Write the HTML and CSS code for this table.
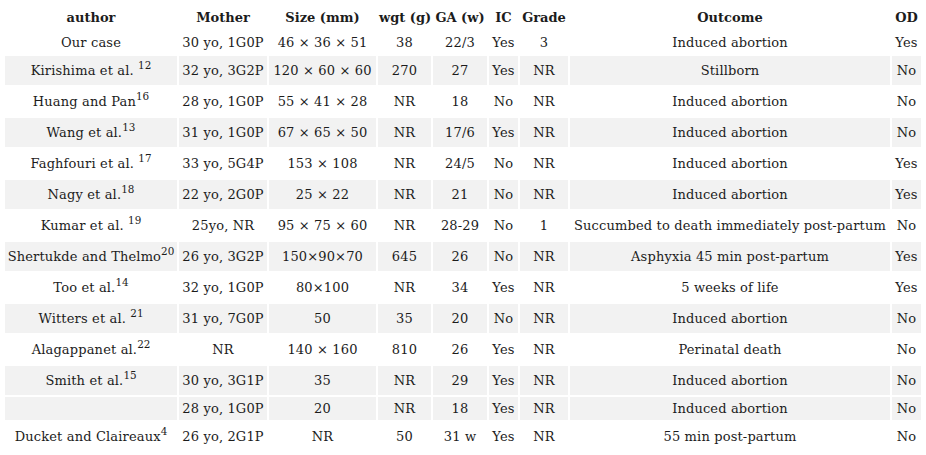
FILE: index.html
```html
<!DOCTYPE html>
<html>
<head>
<meta charset="utf-8">
<link rel="stylesheet" href="styles.css">
</head>
<body>
<table class="cases">
  <colgroup>
    <col class="c-author"><col class="c-mother"><col class="c-size"><col class="c-wgt"><col class="c-ga"><col class="c-ic"><col class="c-grade"><col class="c-outcome"><col class="c-od">
  </colgroup>
  <thead>
    <tr><th>author</th><th>Mother</th><th>Size (mm)</th><th>wgt (g)</th><th>GA (w)</th><th>IC</th><th>Grade</th><th>Outcome</th><th>OD</th></tr>
  </thead>
  <tbody>
    <tr><td>Our case</td><td>30 yo, 1G0P</td><td>46 × 36 × 51</td><td>38</td><td>22/3</td><td>Yes</td><td>3</td><td>Induced abortion</td><td>Yes</td></tr>
    <tr class="alt tall"><td>Kirishima et al. <sup>12</sup></td><td>32 yo, 3G2P</td><td>120 × 60 × 60</td><td>270</td><td>27</td><td>Yes</td><td>NR</td><td>Stillborn</td><td>No</td></tr>
    <tr class="tall"><td>Huang and Pan<sup>16</sup></td><td>28 yo, 1G0P</td><td>55 × 41 × 28</td><td>NR</td><td>18</td><td>No</td><td>NR</td><td>Induced abortion</td><td>No</td></tr>
    <tr class="alt tall"><td>Wang et al.<sup>13</sup></td><td>31 yo, 1G0P</td><td>67 × 65 × 50</td><td>NR</td><td>17/6</td><td>Yes</td><td>NR</td><td>Induced abortion</td><td>No</td></tr>
    <tr class="tall"><td>Faghfouri et al. <sup>17</sup></td><td>33 yo, 5G4P</td><td>153 × 108</td><td>NR</td><td>24/5</td><td>No</td><td>NR</td><td>Induced abortion</td><td>Yes</td></tr>
    <tr class="alt tall"><td>Nagy et al.<sup>18</sup></td><td>22 yo, 2G0P</td><td>25 × 22</td><td>NR</td><td>21</td><td>No</td><td>NR</td><td>Induced abortion</td><td>Yes</td></tr>
    <tr class="tall"><td>Kumar et al. <sup>19</sup></td><td>25yo, NR</td><td>95 × 75 × 60</td><td>NR</td><td>28-29</td><td>No</td><td>1</td><td>Succumbed to death immediately post-partum</td><td>No</td></tr>
    <tr class="alt tall"><td>Shertukde and Thelmo<sup>20</sup></td><td>26 yo, 3G2P</td><td>150×90×70</td><td>645</td><td>26</td><td>No</td><td>NR</td><td>Asphyxia 45 min post-partum</td><td>Yes</td></tr>
    <tr class="tall"><td>Too et al.<sup>14</sup></td><td>32 yo, 1G0P</td><td>80×100</td><td>NR</td><td>34</td><td>Yes</td><td>NR</td><td>5 weeks of life</td><td>Yes</td></tr>
    <tr class="alt tall"><td>Witters et al. <sup>21</sup></td><td>31 yo, 7G0P</td><td>50</td><td>35</td><td>20</td><td>No</td><td>NR</td><td>Induced abortion</td><td>No</td></tr>
    <tr class="tall"><td>Alagappanet al.<sup>22</sup></td><td>NR</td><td>140 × 160</td><td>810</td><td>26</td><td>Yes</td><td>NR</td><td>Perinatal death</td><td>No</td></tr>
    <tr class="alt tall"><td>Smith et al.<sup>15</sup></td><td>30 yo, 3G1P</td><td>35</td><td>NR</td><td>29</td><td>Yes</td><td>NR</td><td>Induced abortion</td><td>No</td></tr>
    <tr class="alt"><td></td><td>28 yo, 1G0P</td><td>20</td><td>NR</td><td>18</td><td>Yes</td><td>NR</td><td>Induced abortion</td><td>No</td></tr>
    <tr class="tall"><td>Ducket and Claireaux<sup>4</sup></td><td>26 yo, 2G1P</td><td>NR</td><td>50</td><td>31 w</td><td>Yes</td><td>NR</td><td>55 min post-partum</td><td>No</td></tr>
  </tbody>
</table>
</body>
</html>
```

FILE: styles.css
```css
html, body {
  background: #ffffff;
}
body {
  margin: 3px;
  font-family: "DejaVu Serif", "Liberation Serif", serif;
  font-size: 13px;
  color: #1c1c1c;
}
.cases {
  border-collapse: separate;
  border-spacing: 2px;
  table-layout: fixed;
  width: 920px;
}
.c-author { width: 172px; }
.c-mother { width: 88px; }
.c-size { width: 107px; }
.c-wgt { width: 53px; }
.c-ga { width: 54px; }
.c-ic { width: 29px; }
.c-grade { width: 48px; }
.c-outcome { width: 320px; }
.c-od { width: 29px; }
.cases th,
.cases td {
  text-align: center;
  line-height: 18px;
  white-space: nowrap;
  padding: 3px 1px 2px;
  letter-spacing: 0.15px;
}
.cases tr.tall td {
  padding: 6px 1px 5px;
}
.cases th {
  font-weight: bold;
  padding: 4px 1px 2px;
  letter-spacing: 0;
}
.cases tr.alt td {
  background: #f2f2f2;
}
.cases sup {
  font-size: 0.8em;
  line-height: 0;
  vertical-align: 6px;
  letter-spacing: 0;
}
```
